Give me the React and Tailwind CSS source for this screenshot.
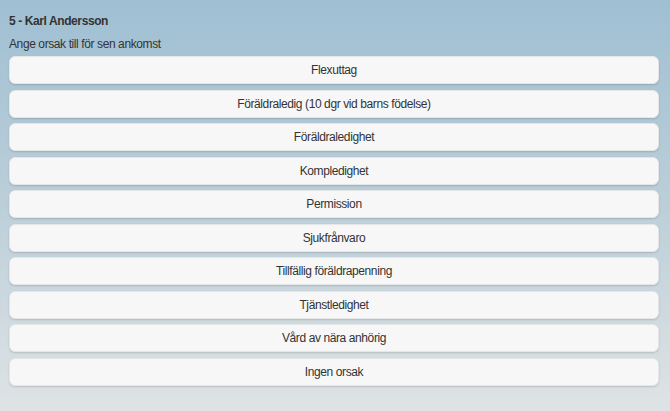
export default function App() {
  const reasons = [
    'Flexuttag',
    'Föräldraledig (10 dgr vid barns födelse)',
    'Föräldraledighet',
    'Kompledighet',
    'Permission',
    'Sjukfrånvaro',
    'Tillfällig föräldrapenning',
    'Tjänstledighet',
    'Vård av nära anhörig',
    'Ingen orsak',
  ]

  return (
    <div
      className="w-[670px] h-[411px] overflow-hidden bg-gradient-to-b from-[#9fbfd3] via-[#bccfd9] to-[#dfe3e5] text-[#333] tracking-[-0.4px]"
      style={{ fontFamily: '"Liberation Sans", Arial, sans-serif' }}
    >
      <div className="px-[9px] pt-[13px]">
        <h2 className="text-[12px] font-bold leading-[16px] h-[16px]">5 - Karl Andersson</h2>
        <p className="text-[12px] leading-[16px] mt-[7px] mb-[4px]">Ange orsak till för sen ankomst</p>
        <div className="flex flex-col gap-[5.5px]">
          {reasons.map((r) => (
            <button
              key={r}
              className="h-[28px] w-[650px] rounded-[6px] bg-[#f7f7f7] border border-[#e4e6e7] shadow-[0_1px_2px_rgba(0,0,0,0.15)] text-[12px] text-[#333] text-center tracking-[-0.4px]"
            >
              {r}
            </button>
          ))}
        </div>
      </div>
    </div>
  )
}
